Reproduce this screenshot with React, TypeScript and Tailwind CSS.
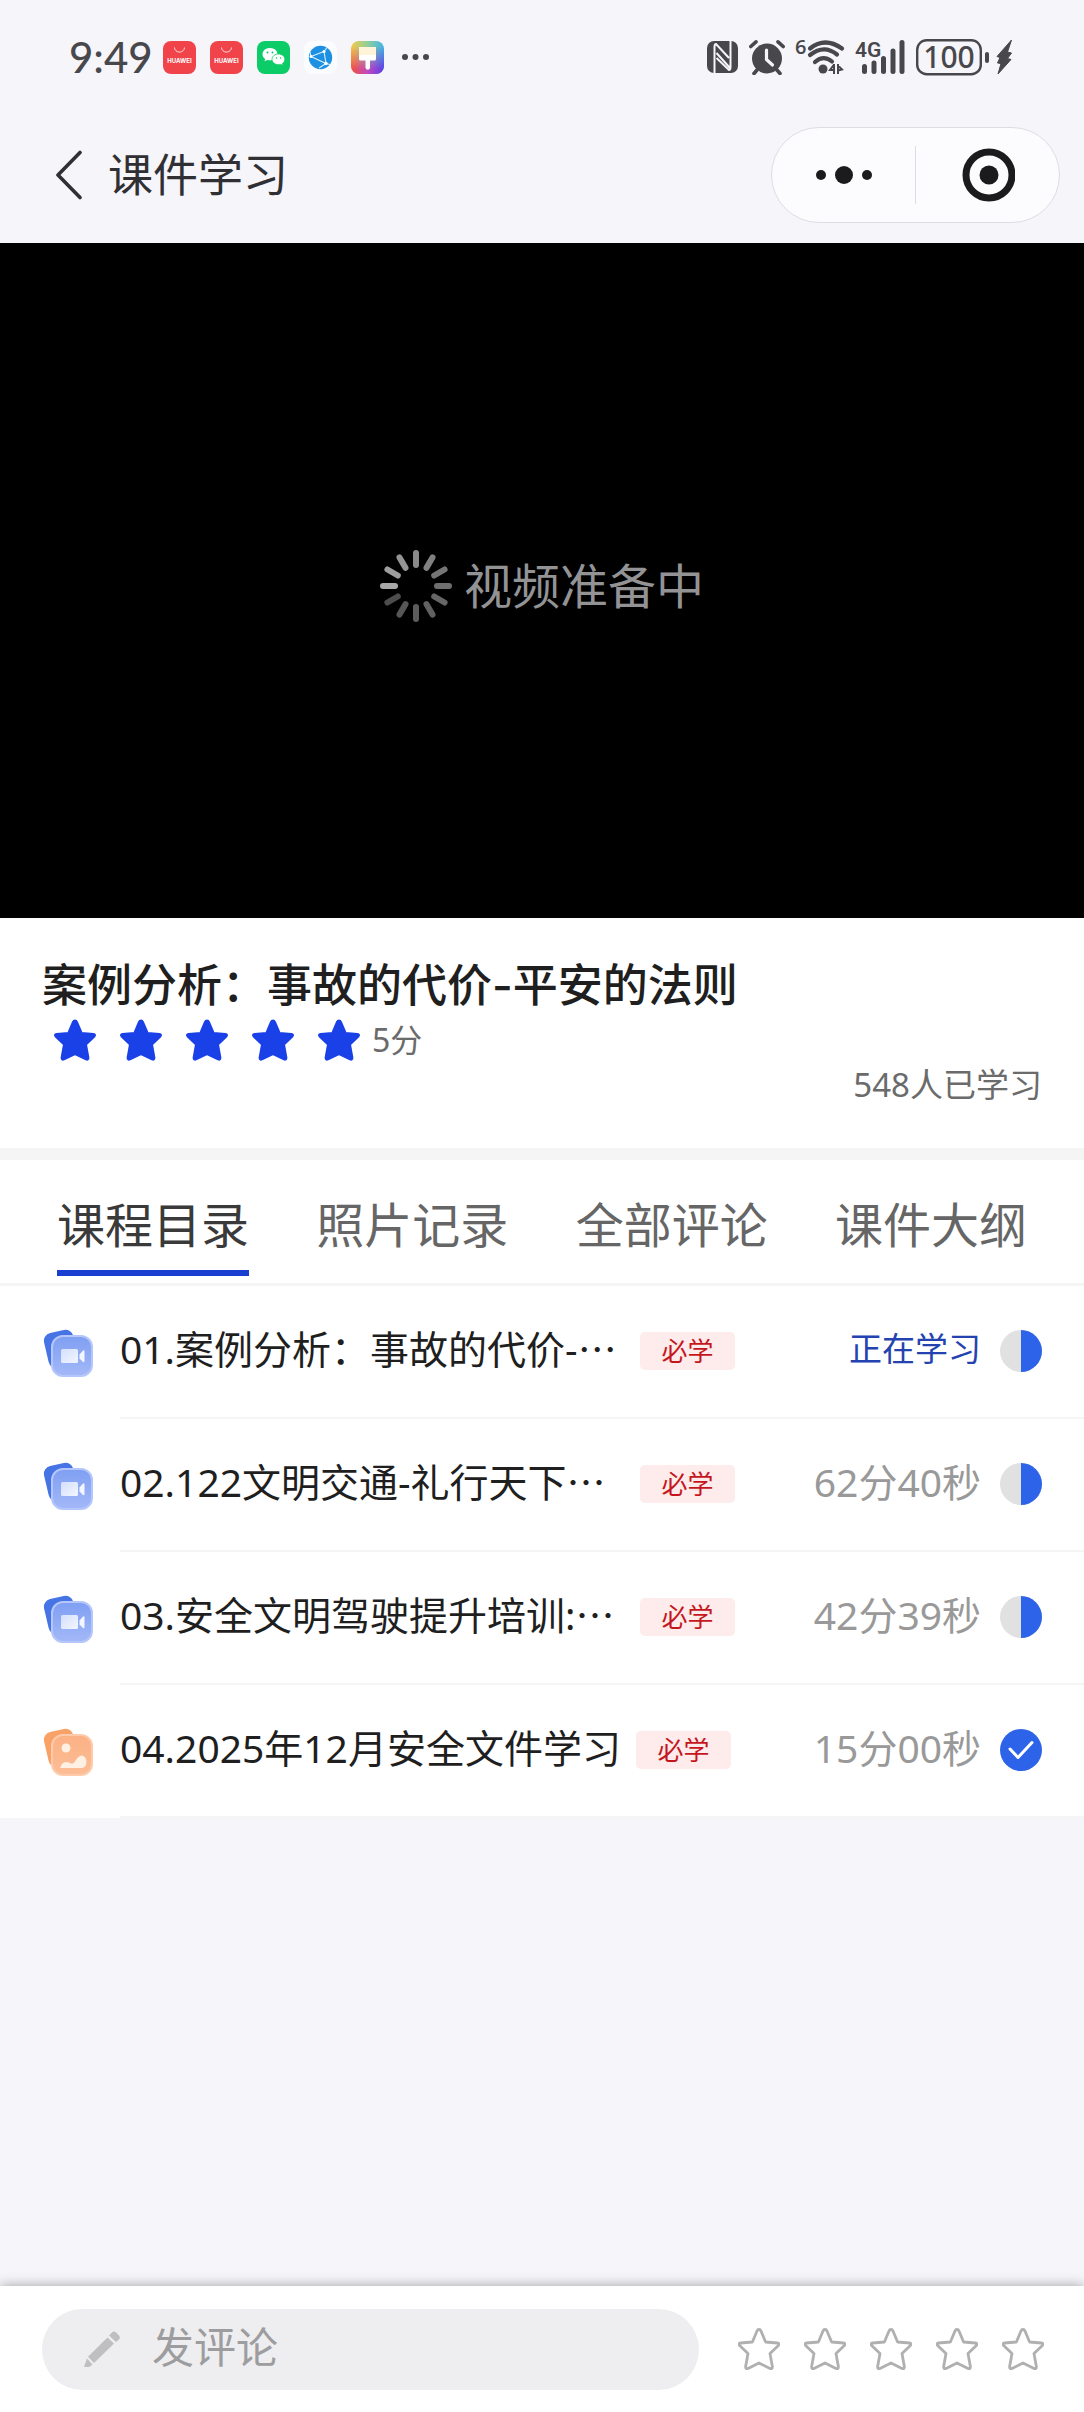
import { useState } from "react";

type Lesson = {
  title: string;
  clipped?: boolean;
  kind: "video" | "image";
  state: "learning" | "half" | "done";
  time?: string;
};

const LESSONS: Lesson[] = [
  { title: "01.案例分析：事故的代价-", clipped: true, kind: "video", state: "learning" },
  { title: "02.122文明交通-礼行天下", clipped: true, kind: "video", state: "half", time: "62分40秒" },
  { title: "03.安全文明驾驶提升培训:", clipped: true, kind: "video", state: "half", time: "42分39秒" },
  { title: "04.2025年12月安全文件学习", kind: "image", state: "done", time: "15分00秒" },
];

const TABS = ["课程目录", "照片记录", "全部评论", "课件大纲"];

const STAR =
  "M21 1.5 Q22.4 1.5 23 3 L27.6 14 L39.4 15 Q42 15.4 40.4 17.5 L32 25.5 L34.4 38.8 Q34.4 41.4 32 40.4 L21 35 L10 40.4 Q7.6 41.4 7.6 38.8 L10 25.5 L1.6 17.5 Q0 15.4 2.6 15 L14.4 14 L19 3 Q19.6 1.5 21 1.5Z";

// 12 spokes, clockwise from 12 o'clock, brightest at 9
const SPOKES = [0.54, 0.5, 0.46, 0.43, 0.4, 0.38, 0.36, 0.34, 0.3, 0.66, 0.62, 0.58];

function HuaweiIcon() {
  return (
    <svg className="size-[33px]" viewBox="0 0 33 33" aria-hidden="true">
      <rect width="33" height="33" rx="8" fill="#f0434a" />
      <path d="M11.5 6.5a5 4.6 0 0 0 10 0" fill="none" stroke="#fff" strokeOpacity=".8" strokeWidth="1" />
      <text x="16.5" y="21.5" textAnchor="middle" fontSize="6" fontWeight="700" fill="#fff" fontFamily="Inter, sans-serif">
        HUAWEI
      </text>
    </svg>
  );
}

function WechatIcon() {
  return (
    <svg className="size-[33px]" viewBox="0 0 33 33" aria-hidden="true">
      <rect width="33" height="33" rx="8" fill="#0ccc68" />
      <path d="M13 7c-4.400 0-7.500 2.700-7.500 6.200 0 2 1 3.600 2.700 4.700l-.7 2.400 2.800-1.400c.9.200 1.800.4 2.700.4 4.400 0 7.500-2.700 7.500-6.100S17.400 7 13 7Z" fill="#fff" />
      <path d="M21.500 13c-3.700 0-6.500 2.300-6.500 5.300s2.800 5.400 6.500 5.400c.8 0 1.600-.1 2.300-.3l2.200 1.200-.6-2c1.500-1 2.400-2.500 2.400-4.300 0-3-2.700-5.300-6.300-5.300Z" fill="#fff" stroke="#0ccc68" strokeWidth=".8" />
      <g fill="#0ccc68">
        <circle cx="10.500" cy="11.500" r="1" />
        <circle cx="15.500" cy="11.500" r="1" />
        <circle cx="19.500" cy="17" r=".8" />
        <circle cx="23.600" cy="17" r=".8" />
      </g>
    </svg>
  );
}

function NetworkIcon() {
  return (
    <svg className="size-[33px]" viewBox="0 0 33 33" aria-hidden="true">
      <rect width="33" height="33" rx="8" fill="#fbfcff" />
      <circle cx="16.500" cy="16.500" r="11.700" fill="#1e90e2" />
      <path d="M7 15.500 20 10.500 22 22.500ZM7 15.500 6 11M22 22.500l-7 4.500M20 10.500l3-4M22 22.500l4 1" fill="none" stroke="#d8f0ff" strokeWidth="1.100" />
      <g fill="#fff">
        <circle cx="20" cy="10.500" r="1.500" />
        <circle cx="22" cy="22.500" r="1.700" />
        <circle cx="7" cy="15.500" r="1.500" />
      </g>
    </svg>
  );
}

function ThemeIcon() {
  return (
    <svg className="size-[33px]" viewBox="0 0 33 33" aria-hidden="true">
      <defs>
        <linearGradient id="thA" x1="0" y1="0" x2="1" y2="0">
          <stop offset="0" stopColor="#f7c948" />
          <stop offset=".5" stopColor="#8fcf9a" />
          <stop offset="1" stopColor="#3fb4e8" />
        </linearGradient>
        <linearGradient id="thB" x1="0" y1="0" x2="1" y2="0">
          <stop offset="0" stopColor="#f4503f" />
          <stop offset=".5" stopColor="#c04ac0" />
          <stop offset="1" stopColor="#5a3fe8" />
        </linearGradient>
        <linearGradient id="thFade" x1="0" y1="0" x2="0" y2="1">
          <stop offset=".15" stopColor="#fff" stopOpacity="0" />
          <stop offset=".85" stopColor="#fff" />
        </linearGradient>
        <mask id="thMask">
          <rect width="33" height="33" fill="url(#thFade)" />
        </mask>
      </defs>
      <rect width="33" height="33" rx="8" fill="url(#thA)" />
      <rect width="33" height="33" rx="8" fill="url(#thB)" mask="url(#thMask)" />
      <rect x="8" y="6" width="17" height="8" fill="#fff4d8" />
      <path d="M8 14h17v4q0 1.500-1.500 1.500H19V27a2.300 2.300 0 0 1-4.500 0v-7.500H9.500Q8 19.500 8 18Z" fill="#fff" />
    </svg>
  );
}

function StatusBar() {
  return (
    <div className="flex h-[106px] items-center justify-between pt-2 pr-[71px] pl-[69px] text-[#48484c]">
      <div className="flex items-center gap-[14px]">
        <span className="w-20 font-['Lato','Noto_Sans_CJK_SC',sans-serif] text-[42px] leading-[44px] font-medium whitespace-nowrap">9:49</span>
        <HuaweiIcon />
        <HuaweiIcon />
        <WechatIcon />
        <NetworkIcon />
        <ThemeIcon />
        <svg className="ml-1 h-2 w-7" viewBox="0 0 28 8" fill="currentColor" aria-hidden="true">
          <circle cx="3" cy="4" r="3" />
          <circle cx="13.500" cy="4" r="3" />
          <circle cx="24" cy="4" r="3" />
        </svg>
      </div>

      <div className="flex items-center gap-[11px]">
        <svg className="h-8 w-[31px]" viewBox="0 0 31 32" aria-hidden="true">
          <rect width="31" height="32" rx="7" fill="currentColor" />
          <path d="M7.500 32V6Q7.500 3 9 3L22 17M9.500 12l13.500 15M23.500 0v26Q23.500 29 22 29L9.500 17" stroke="#f5f5fa" strokeWidth="2" fill="none" />
        </svg>
        <svg className="h-9 w-9" viewBox="0 0 36 36" aria-hidden="true">
          <circle cx="18" cy="19.500" r="15" fill="currentColor" />
          <path d="M1.800 7.500 7 2.800M34.200 7.500 29 2.800M8 31l-3 3.500M28 31l3 3.500" stroke="currentColor" strokeWidth="3.600" strokeLinecap="round" />
          <path d="M17.500 11v9.500l6 5.500" stroke="#f5f5fa" strokeWidth="3.200" fill="none" strokeLinecap="round" strokeLinejoin="round" />
        </svg>
        <svg className="h-9 w-12 overflow-visible" viewBox="0 0 48 36" aria-hidden="true">
          <text x="-1" y="15" fontSize="20" fontWeight="600" fill="currentColor" fontFamily="Open Sans, sans-serif">6</text>
          <g fill="none" stroke="currentColor" strokeWidth="4.200" strokeLinecap="round">
            <path d="M14 9.500Q29 -2.500 46 9.500" />
            <path d="M14 16Q28 5 41 15.500" />
            <path d="M19 23Q27.500 15.500 36 22.500" />
          </g>
          <circle cx="27" cy="30" r="4.500" fill="currentColor" />
          <path d="M38 25v10M38 25.500l-4 5.500h5M42 25v10M42 26.500l4 4-4 1" stroke="currentColor" strokeWidth="2" fill="none" />
        </svg>
        <svg className="h-9 w-[50px] overflow-visible" viewBox="0 0 50 36" aria-hidden="true">
          <text x="0" y="18" fontSize="21" fontWeight="600" fill="currentColor" fontFamily="Roboto, sans-serif">4G</text>
          <path d="M9.500 27.500v5M19 24v8.500M28.500 19.500v13M38 12v20.500M47 3.500v29" stroke="currentColor" strokeWidth="5" strokeLinecap="round" />
        </svg>
        <svg className="h-9 w-[73px] overflow-visible" viewBox="0 0 73 36" aria-hidden="true">
          <rect x="1.200" y="1.200" width="63.600" height="34" rx="9.500" fill="none" stroke="currentColor" strokeWidth="2.400" />
          <rect x="69" y="13" width="4" height="11" rx="2" fill="currentColor" />
          <text x="33" y="29" textAnchor="middle" fontSize="30" fontWeight="500" fill="currentColor" fontFamily="Noto Sans, sans-serif">100</text>
        </svg>
        <svg className="-ml-1 h-9 w-[17px]" viewBox="0 0 17 36" aria-hidden="true">
          <path d="M15.500 1 1 17.500 4 18.500 1.500 24 5 24.500 2 35 15 20.500 11.500 19.500 15.500 14 11.500 13Z" fill="currentColor" stroke="currentColor" strokeLinejoin="round" />
        </svg>
      </div>
    </div>
  );
}

function NavBar() {
  return (
    <header className="flex h-[137px] items-center justify-between pr-6 pl-[55px]">
      <div className="flex items-center gap-[25px]">
        <button type="button" aria-label="返回" className="text-[#303034]">
          <svg className="h-[50px] w-7" viewBox="0 0 28 50" fill="none" stroke="currentColor" strokeWidth="3.600" strokeLinecap="round" strokeLinejoin="round">
            <path d="M25 2.500 3 25l22 22.500" />
          </svg>
        </button>
        <h1 className="text-[45px] leading-[60px] text-[#303034]">课件学习</h1>
      </div>
      <div className="flex h-24 w-[289px] items-center rounded-full border border-[#dedee2] bg-[#fcfcff] text-[#1b1b1e]">
        <button type="button" aria-label="更多" className="flex flex-1 justify-center">
          <svg className="h-5 w-14" viewBox="0 0 56 20" fill="currentColor">
            <circle cx="5" cy="10" r="5" />
            <circle cx="28" cy="10" r="9" />
            <circle cx="51" cy="10" r="5" />
          </svg>
        </button>
        <span className="h-[58px] w-px bg-[#dedee2]" />
        <button type="button" aria-label="关闭" className="flex flex-1 justify-center">
          <svg className="size-[54px]" viewBox="0 0 54 54">
            <circle cx="28" cy="27" r="23" fill="none" stroke="currentColor" strokeWidth="7" />
            <circle cx="28" cy="27" r="9.500" fill="currentColor" />
          </svg>
        </button>
      </div>
    </header>
  );
}

function Spinner() {
  return (
    <svg className="size-[72px]" viewBox="-36 -36 72 72" aria-hidden="true">
      {SPOKES.map((o, i) => (
        <rect key={i} x="-3" y="-36" width="6" height="18" rx="3" fill="#fff" opacity={o} transform={`rotate(${i * 30})`} />
      ))}
    </svg>
  );
}

function LessonIcon({ kind }: { kind: Lesson["kind"] }) {
  const video = kind === "video";
  return (
    <svg className="h-12 w-[50px] shrink-0" viewBox="0 0 50 48" aria-hidden="true">
      <defs>
        <linearGradient id={`front-${kind}`} x1="0" y1="0" x2="0" y2="1">
          <stop offset="0" stopColor={video ? "#7f9ff2" : "#fbb184"} />
          <stop offset="1" stopColor={video ? "#a3b8f8" : "#fcbd96"} />
        </linearGradient>
        <linearGradient id="lens" x1="0" y1="0" x2="1" y2="1">
          <stop offset="0" stopColor="#d3dffc" />
          <stop offset="1" stopColor="#f3f6ff" />
        </linearGradient>
      </defs>
      <rect x="3" y="2" width="30" height="36" rx="8" transform="rotate(-13 18 20)" fill={video ? "#4674e4" : "#f9a267"} />
      <rect x="9" y="7" width="40" height="40" rx="11" fill={`url(#front-${kind})`} stroke={video ? "#b4c6fa" : "#fdcbab"} strokeWidth="2" />
      {video ? (
        <g fill="url(#lens)">
          <rect x="18" y="20" width="17" height="14" rx="1.500" />
          <path d="M36.500 25.500 40 21.500Q41.500 20.500 41.500 22.500V32Q41.500 34 40 33l-3.500-3.500Z" fill="#f3f6ff" />
        </g>
      ) : (
        <g fill="#fff0e4">
          <circle cx="23" cy="20" r="4.500" />
          <path d="M17 40q2-6 6-6 3 0 5 1.500 2 1 4-2 3-6 7-6 4 1 4.500 6 0 6.500-5 6.500Z" />
        </g>
      )}
    </svg>
  );
}

function Progress({ state }: { state: Lesson["state"] }) {
  return (
    <svg className="size-[42px] shrink-0" viewBox="0 0 42 42" aria-hidden="true">
      {state === "done" ? (
        <>
          <circle cx="21" cy="21" r="21" fill="#2d63e8" />
          <path d="M10 20l8 8.500L32 13.500" fill="none" stroke="#fff" strokeWidth="3" strokeLinecap="round" strokeLinejoin="round" />
        </>
      ) : (
        <>
          <circle cx="21" cy="21" r="21" fill="#e1e1e2" />
          <path d="M21 0a21 21 0 0 1 0 42Z" fill="#2d63e8" />
        </>
      )}
    </svg>
  );
}

function LessonRow({ lesson }: { lesson: Lesson }) {
  return (
    <li className="flex h-[133px] items-stretch pl-[43px]">
      <div className="flex w-[77px] shrink-0 items-center">
        <LessonIcon kind={lesson.kind} />
      </div>
      <div className="flex flex-1 items-center border-b-2 border-[#f5f5f6] pr-[42px] pb-[2px]">
        <a
          href="#"
          className={`pb-1 text-[39px] leading-[56px] whitespace-nowrap text-[#1f1f1f] ${lesson.clipped ? "min-w-[505px]" : ""}`}
        >
          {lesson.title}
          {lesson.clipped && "⋯"}
        </a>
        <span className="ml-[15px] flex h-[38px] w-[95px] items-center justify-center rounded-[5px] bg-[#feebeb] text-[26px] leading-[38px] text-[#c4161c]">
          必学
        </span>
        {lesson.state === "learning" ? (
          <span className="ml-auto pb-1 text-[33px] leading-[56px] text-[#2443b0]">正在学习</span>
        ) : (
          <span className="ml-auto pb-1 text-[39px] leading-[56px] text-[#999]">{lesson.time}</span>
        )}
        <span className="ml-[19px]">
          <Progress state={lesson.state} />
        </span>
      </div>
    </li>
  );
}

export default function App() {
  const [tab, setTab] = useState(0);
  const [score, setScore] = useState(0);

  return (
    <div className="flex min-h-screen flex-col bg-[#f5f5fa] font-['Noto_Sans','Noto_Sans_CJK_SC',sans-serif]">
      <StatusBar />
      <NavBar />

      <div className="flex h-[675px] items-center justify-center gap-3 bg-black pt-[10px]">
        <Spinner />
        <span className="text-[48px] leading-[60px] text-[#939395]">视频准备中</span>
      </div>

      <section className="bg-white px-[42px] pt-[37px] pb-[41px]">
        <h2 className="font-['Inter','Noto_Sans_CJK_SC',sans-serif] text-[45px] leading-[62px] font-medium text-[#1f1f1f]">
          案例分析：事故的代价-平安的法则
        </h2>
        <div className="flex h-[46px] items-center gap-6 pl-3">
          {[1, 2, 3, 4, 5].map((n) => (
            <svg key={n} className="size-[42px]" viewBox="0 0 42 42" aria-hidden="true">
              <path d={STAR} fill="#1a41e8" stroke="#1a41e8" strokeWidth="2" strokeLinejoin="round" />
            </svg>
          ))}
          <span className="-ml-3 text-[32px] leading-[46px] text-[#6b6b6b]">5分</span>
        </div>
        <p className="text-right text-[33px] leading-[44px] text-[#6b6b6b]">548人已学习</p>
      </section>

      <main className="border-t-12 border-[#f5f5f6] bg-white">
        <div role="tablist" className="flex h-[126px] items-start justify-between border-b-3 border-[#f5f5f6] px-[57px] pt-[30px]">
          {TABS.map((name, i) => (
            <button
              key={name}
              type="button"
              role="tab"
              aria-selected={i === tab}
              onClick={() => setTab(i)}
              className={`h-[86px] border-b-6 pb-[10px] text-[48px] leading-[70px] ${
                i === tab ? "border-[#1a3fd0] text-[#3a3a3a]" : "border-transparent text-[#666]"
              }`}
            >
              {name}
            </button>
          ))}
        </div>
        <ul>
          {LESSONS.map((l) => (
            <LessonRow key={l.title} lesson={l} />
          ))}
        </ul>
      </main>

      <footer className="sticky bottom-0 mt-auto flex h-[126px] items-center bg-white pr-[40px] pl-[42px] shadow-[0_0_12px_rgba(0,0,0,0.35)]">
        <label className="flex h-[81px] min-w-0 flex-1 items-center rounded-full bg-[#eeeef0] pl-[42px]">
          <svg className="h-[38px] w-[38px] shrink-0" viewBox="0 0 38 38" fill="#bfbfc1" aria-hidden="true">
            <path d="M4 26.700 23.500 7.500 30 13.500 10 33Z" />
            <path d="M25 5.500 28.500 2Q30 1 31.500 2L35 5.500Q36.500 7 35.500 9L32 12Z" />
            <path d="M3 28.500 8.500 34.500 6 36.500Q5 37 3 37H1Q-.2 37 .5 35.500Z" />
          </svg>
          <input
            type="text"
            aria-label="发评论"
            placeholder="发评论"
            className="ml-[30px] min-w-0 flex-1 bg-transparent pb-1 text-[42px] leading-[60px] text-[#333] outline-none placeholder:text-[#9d9d9f]"
          />
        </label>
        <div className="ml-[39px] flex gap-6">
          {[1, 2, 3, 4, 5].map((n) => (
            <button key={n} type="button" aria-label={`${n}分`} onClick={() => setScore(n)}>
              <svg className="size-[42px]" viewBox="0 0 42 42" aria-hidden="true">
                <path
                  d={STAR}
                  fill={n <= score ? "#1a41e8" : "none"}
                  stroke={n <= score ? "#1a41e8" : "#b0b0b0"}
                  strokeWidth="2.800"
                  strokeLinejoin="round"
                />
              </svg>
            </button>
          ))}
        </div>
      </footer>
    </div>
  );
}
